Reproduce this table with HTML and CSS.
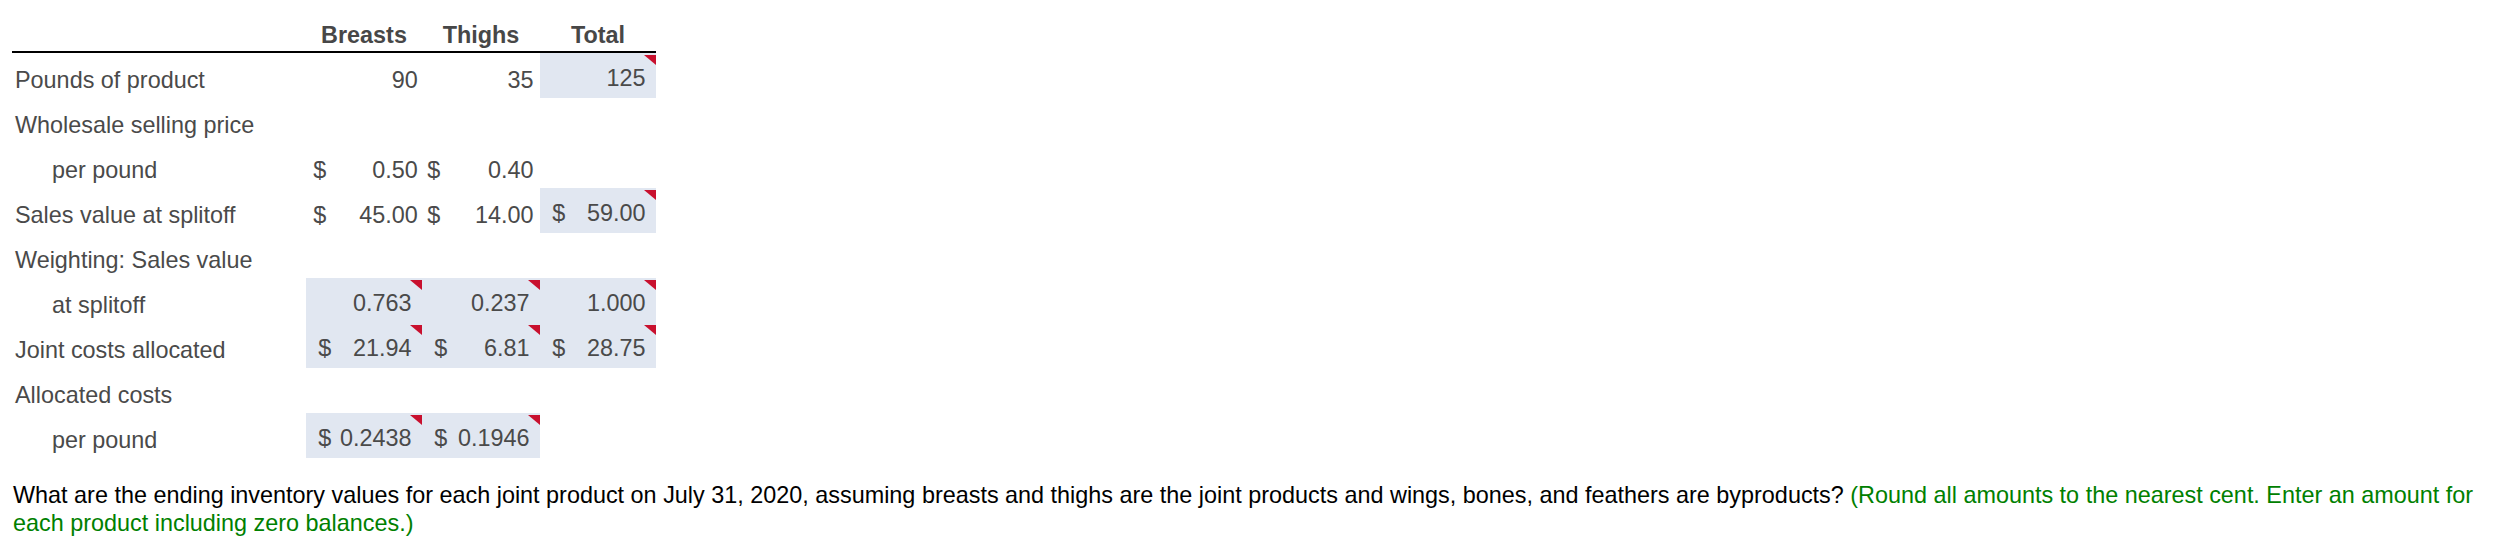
FILE: index.html
```html
<!DOCTYPE html>
<html>
<head>
<meta charset="utf-8">
<link rel="stylesheet" href="styles.css">
</head>
<body>
<div class="page">
  <div class="sheet">
    <div class="row head">
      <div class="hcell"></div>
      <div class="hcell">Breasts</div>
      <div class="hcell">Thighs</div>
      <div class="hcell">Total</div>
    </div>

    <div class="row">
      <div class="label">Pounds of product</div>
      <div class="num c1"><span></span><span>90</span></div>
      <div class="num c2"><span></span><span>35</span></div>
      <div class="num input"><span></span><span>125</span><i class="flag"></i></div>
    </div>

    <div class="row">
      <div class="label">Wholesale selling price</div>
      <div class="num c1"></div>
      <div class="num c2"></div>
      <div class="num"></div>
    </div>

    <div class="row">
      <div class="label sub">per pound</div>
      <div class="num c1"><span>$</span><span>0.50</span></div>
      <div class="num c2"><span>$</span><span>0.40</span></div>
      <div class="num"></div>
    </div>

    <div class="row">
      <div class="label">Sales value at splitoff</div>
      <div class="num c1"><span>$</span><span>45.00</span></div>
      <div class="num c2"><span>$</span><span>14.00</span></div>
      <div class="num input"><span>$</span><span>59.00</span><i class="flag"></i></div>
    </div>

    <div class="row">
      <div class="label">Weighting: Sales value</div>
      <div class="num c1"></div>
      <div class="num c2"></div>
      <div class="num"></div>
    </div>

    <div class="row">
      <div class="label sub">at splitoff</div>
      <div class="num input"><span></span><span>0.763</span><i class="flag"></i></div>
      <div class="num input"><span></span><span>0.237</span><i class="flag"></i></div>
      <div class="num input"><span></span><span>1.000</span><i class="flag"></i></div>
    </div>

    <div class="row">
      <div class="label">Joint costs allocated</div>
      <div class="num input"><span>$</span><span>21.94</span><i class="flag"></i></div>
      <div class="num input"><span>$</span><span>6.81</span><i class="flag"></i></div>
      <div class="num input"><span>$</span><span>28.75</span><i class="flag"></i></div>
    </div>

    <div class="row">
      <div class="label">Allocated costs</div>
      <div class="num c1"></div>
      <div class="num c2"></div>
      <div class="num"></div>
    </div>

    <div class="row">
      <div class="label sub">per pound</div>
      <div class="num input"><span>$</span><span>0.2438</span><i class="flag"></i></div>
      <div class="num input"><span>$</span><span>0.1946</span><i class="flag"></i></div>
      <div class="num"></div>
    </div>
  </div>

  <p class="question">What are the ending inventory values for each joint product on July 31, 2020, assuming breasts and thighs are the joint products and wings, bones, and feathers are byproducts? <span class="hint">(Round all amounts to the nearest cent. Enter an amount for each product including zero balances.)</span></p>
</div>
</body>
</html>
```

FILE: styles.css
```css
html, body {
  margin: 0;
  padding: 0;
  background: #ffffff;
}

.page {
  padding: 0 0 0 12px;
  font-family: "Liberation Sans", Arial, sans-serif;
  font-size: 23.4px;
  color: #4a4a4a;
}

.sheet {
  display: flex;
  flex-direction: column;
  width: 644px;
}

.row {
  display: grid;
  grid-template-columns: 294px 116px 118px 116px;
  height: 45px;
  line-height: 27px;
}

.row.head {
  height: 52.5px;
  box-sizing: border-box;
  border-bottom: 2px solid #000000;
}

.hcell {
  padding-top: 21.6px;
  text-align: center;
  font-weight: bold;
  color: #474747;
}

.label {
  padding: 14.8px 0 0 3px;
  white-space: nowrap;
}

.label.sub {
  padding-left: 40px;
}

.num {
  position: relative;
  display: flex;
  justify-content: space-between;
  box-sizing: border-box;
  height: 45px;
  padding-top: 14.8px;
  white-space: nowrap;
}

.num.c1 {
  padding-left: 7.3px;
  padding-right: 4.3px;
}

.num.c2 {
  padding-left: 5.3px;
  padding-right: 6.5px;
}

.num.input {
  background: #e1e7f1;
  padding: 12.2px 10.5px 0 12.3px;
}

.flag {
  position: absolute;
  top: 2.5px;
  right: 0;
  width: 0;
  height: 0;
  border-top: 10px solid #c8102e;
  border-left: 12px solid transparent;
}

.question {
  margin: 23px 0 0 0;
  padding: 0 6px 0 1px;
  line-height: 28.8px;
  color: #000000;
}

.hint {
  color: #008000;
}
```
